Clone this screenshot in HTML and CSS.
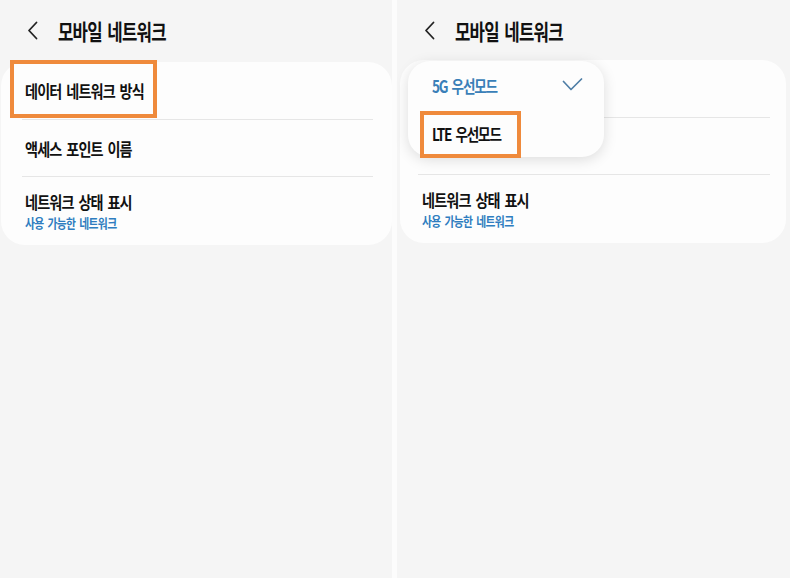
FILE: index.html
```html
<!DOCTYPE html>
<html lang="ko">
<head>
  <meta charset="UTF-8">
  <meta name="viewport" content="width=device-width, initial-scale=1.0">
  <title>모바일 네트워크</title>
  <link rel="stylesheet" href="styles.css">
</head>
<body>
  <div class="screens">
    <!-- before: settings list -->
    <div class="screen screen-left">
      <div class="header">
        <svg class="back" width="11" height="19" viewBox="0 0 11 19">
          <polyline points="9.5,1.5 2,9.5 9.5,17.5" fill="none" stroke="#222" stroke-width="1.8" stroke-linecap="round" stroke-linejoin="round"/>
        </svg>
        <h1><span class="label">모바일 네트워크</span></h1>
      </div>
      <div class="card">
        <div class="row row-first"><span class="label">데이터 네트워크 방식</span></div>
        <div class="row row-mid"><span class="label">액세스 포인트 이름</span></div>
        <div class="row row-last">
          <span class="label">네트워크 상태 표시</span>
          <span class="label sub">사용 가능한 네트워크</span>
        </div>
        <div class="highlight highlight-left"></div>
      </div>
    </div>

    <div class="split"></div>

    <!-- after: mode popup open -->
    <div class="screen screen-right">
      <div class="header">
        <svg class="back" width="11" height="19" viewBox="0 0 11 19">
          <polyline points="9.5,1.5 2,9.5 9.5,17.5" fill="none" stroke="#222" stroke-width="1.8" stroke-linecap="round" stroke-linejoin="round"/>
        </svg>
        <h1><span class="label">모바일 네트워크</span></h1>
      </div>
      <div class="card">
        <div class="row row-first"></div>
        <div class="row row-mid"></div>
        <div class="row row-last">
          <span class="label">네트워크 상태 표시</span>
          <span class="label sub">사용 가능한 네트워크</span>
        </div>
        <div class="popup">
          <div class="option selected">
            <span class="label">5G 우선모드</span>
            <svg width="21" height="13" viewBox="0 0 21 13">
              <polyline points="1.5,3.5 9,11.5 19.5,1" fill="none" stroke="#4f7ea6" stroke-width="1.7" stroke-linecap="round" stroke-linejoin="round"/>
            </svg>
          </div>
          <div class="option"><span class="label">LTE 우선모드</span></div>
          <div class="highlight highlight-right"></div>
        </div>
      </div>
    </div>
  </div>
</body>
</html>
```

FILE: styles.css
```css
body {
  margin: 0;
  padding: 0;
  background-color: #f5f5f5;
  font-family: "Noto Sans CJK KR", "Noto Sans", sans-serif;
  color: #111;
}

.screens {
  display: flex;
  width: 790px;
  height: 578px;
}

.screen {
  background-color: #f5f5f5;
  height: 100%;
}

.screen-left {
  width: 392px;
}

.screen-right {
  width: 393px;
}

.split {
  width: 5px;
  background-color: #fcfcfc;
}

/* samsung's font is narrow, so labels get squeezed sideways */
.label {
  display: inline-block;
  white-space: nowrap;
  transform: scaleX(0.83);
  transform-origin: 0 50%;
  letter-spacing: -1px;
  word-spacing: 2px;
}

.header {
  display: flex;
  align-items: center;
  height: 61px;
  padding-left: 27px;
  box-sizing: border-box;
}

.back {
  margin-right: 20px;
}

.header h1 {
  margin: 0;
  font-size: 22px;
  font-weight: 700;
  line-height: 24px;
  padding-bottom: 1px;
}

.header h1 .label {
  transform: scaleX(0.76);
  word-spacing: 2px;
}

.card {
  position: relative;
  background-color: #fdfdfd;
  border-radius: 24px;
}

.screen-left .card {
  margin-left: 1px;
  margin-top: 1px;
}

.screen-right .card {
  margin-left: 3px;
  margin-right: 4px;
  margin-top: -1px;
}

.row {
  display: flex;
  flex-direction: column;
  justify-content: center;
  align-items: flex-start;
  padding-left: 24px;
  font-size: 17px;
  font-weight: 700;
  line-height: 20px;
  position: relative;
}

.row-first {
  height: 58px;
}

.row-mid {
  height: 57px;
}

.row-last {
  height: 68px;
}

.row-first::after,
.row-mid::after {
  content: "";
  position: absolute;
  left: 21px;
  right: 19px;
  bottom: 0;
  height: 1px;
  background-color: #e6e6e6;
}

.screen-right .row {
  padding-left: 22px;
}

.screen-right .row-first::after,
.screen-right .row-mid::after {
  left: 18px;
  right: 16px;
}

.row .sub {
  font-size: 13px;
  line-height: 16px;
  letter-spacing: -0.8px;
  transform: scaleX(0.83);
  color: #2f7dc0;
  margin-top: 3px;
}

.highlight {
  position: absolute;
  border: 4px solid #ef8a3c;
  box-sizing: border-box;
}

.highlight-left {
  left: 9px;
  top: -2px;
  width: 147px;
  height: 58px;
}

.popup {
  position: absolute;
  left: 8px;
  top: 1px;
  width: 196px;
  height: 96px;
  background-color: #fdfdfd;
  border-radius: 22px;
  box-shadow: 0 3px 14px rgba(0, 0, 0, 0.13);
}

.option {
  display: flex;
  align-items: center;
  justify-content: space-between;
  height: 48px;
  padding: 0 21px 0 24px;
  font-size: 17px;
  font-weight: 700;
}

.option .label {
  transform: scaleX(0.8);
  letter-spacing: -1.5px;
}

.option.selected {
  color: #3a7fb8;
}

.option svg {
  margin-top: -2px;
}

.highlight-right {
  left: 12px;
  top: 50px;
  width: 101px;
  height: 47px;
}
```
